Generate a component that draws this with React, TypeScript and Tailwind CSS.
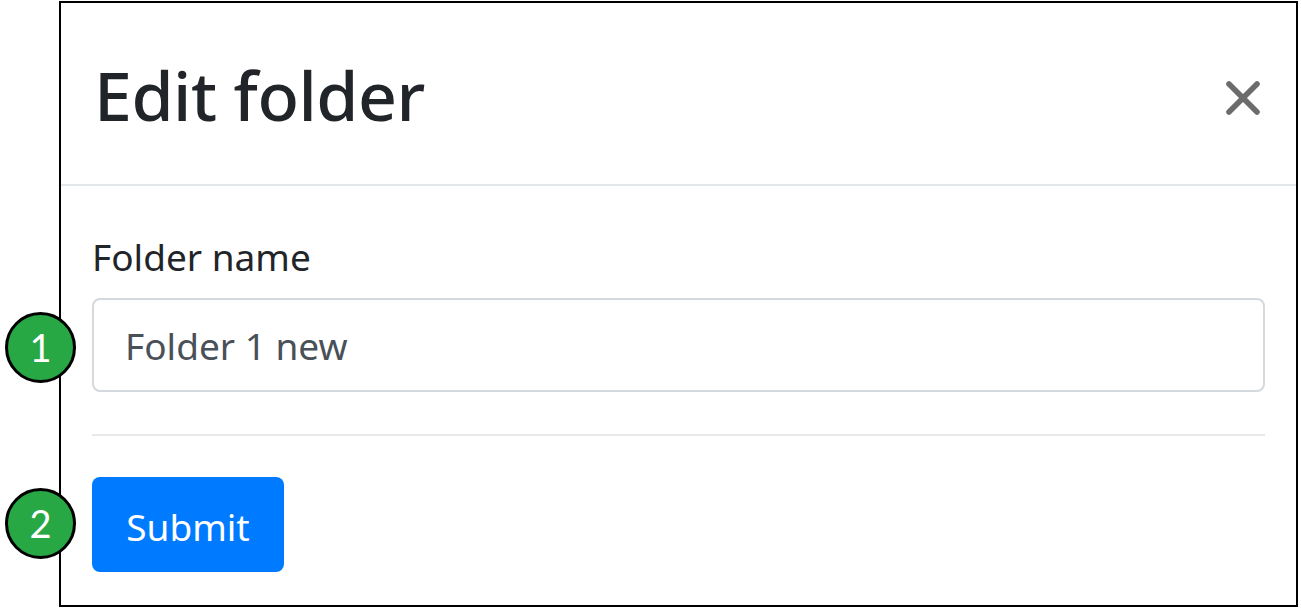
import { X } from "lucide-react";

function Badge({ n, top }: { n: string; top: number }) {
  return (
    <div
      className="absolute left-[5px] w-[71px] h-[71px] rounded-full bg-[#28a745] border-[3px] border-black flex items-center justify-center text-white text-[38px] font-['Lato',sans-serif]"
      style={{ top }}
    >
      {n}
    </div>
  );
}

export default function App() {
  return (
    <div className="relative w-[1301px] h-[608px] bg-white font-['Noto_Sans',sans-serif] overflow-hidden">
      <div className="ml-[59px] mt-[1px] w-[1239px] h-[606px] border-2 border-black flex flex-col">
        <div className="h-[183px] border-b-2 border-[#e4e7ea] flex items-center justify-between pl-[33px] pr-[25px]">
          <h1 className="text-[68px] font-medium text-[#212529] leading-none tracking-[-0.5px] mt-[2px]">Edit folder</h1>
          <X className="w-[56px] h-[56px] text-[#6c6c6c] mt-[8px]" strokeWidth={2.4} />
        </div>
        <div className="px-[31px] pt-[46px] flex flex-col">
          <label className="text-[37px] text-[#212529] leading-[50px]">Folder name</label>
          <div className="mt-[16px] h-[94px] border-2 border-[#d4d9de] rounded-[8px] flex items-center px-[31px] text-[37px] text-[#495057]">
            <span className="mt-[2px]">Folder 1 new</span>
          </div>
          <div className="mt-[42px] h-[2px] bg-[#e6e8ea]" />
          <div className="mt-[41px]">
            <button className="w-[192px] h-[95px] rounded-[8px] bg-[#007bff] text-white text-[37px]">
              <span className="relative top-[2px]">Submit</span>
            </button>
          </div>
        </div>
      </div>
      <Badge n="1" top={312} />
      <Badge n="2" top={488} />
    </div>
  );
}
